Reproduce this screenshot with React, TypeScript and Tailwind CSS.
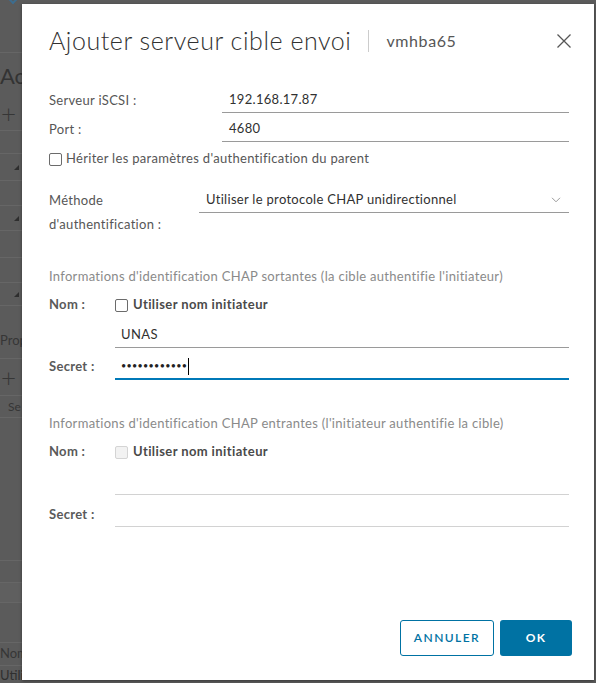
import { ReactNode } from 'react'

const font = { fontFamily: 'Lato, "Noto Sans", sans-serif' }

function Checkbox({ disabled }: { disabled?: boolean }) {
    return (
        <span
            className={
                disabled
                    ? 'inline-block w-[13px] h-[13px] rounded-[2px] border border-[#d4d4d4] bg-[#f2f2f2] shrink-0'
                    : 'inline-block w-[13px] h-[13px] rounded-[2px] border border-[#6b6b6b] bg-white shrink-0'
            }
        />
    )
}

function TextRow({ label, value, labelW }: { label: string; value: string; labelW: string }) {
    return (
        <div className="flex items-stretch h-[25px]">
            <div className={`${labelW} flex items-center text-[13px] tracking-[0.3px] text-[#565656]`}>{label}</div>
            <div className="flex-1 flex items-center px-[7px] border-b border-[#9a9a9a] text-[13px] tracking-[0.3px] text-[#313131]">
                {value}
            </div>
        </div>
    )
}

function BoldRow({ label, children, line, h = 'h-[25px]' }: { label: string; children?: ReactNode; line?: string; h?: string }) {
    return (
        <div className={`flex items-stretch ${h}`}>
            <div className="w-[66px] flex items-center text-[13px] font-bold tracking-[0.3px] text-[#5a5a5a]">{label}</div>
            <div className={`flex-1 flex items-center px-[6px] ${line || ''} text-[13px] text-[#313131]`}>{children}</div>
        </div>
    )
}

// dim page behind the dialog, only a thin strip of it shows
function BackgroundStrip() {
    const row = 'border-b border-[#666666] flex items-center overflow-hidden whitespace-nowrap text-[#363636]'
    const tri = <span className="ml-auto mr-[3px] w-0 h-0 border-l-[5px] border-l-transparent border-b-[5px] border-b-[#2e2e2e]" />
    return (
        <div className="w-[22px] flex flex-col text-[13px]" style={font}>
            <div className={`${row} h-[53px] items-start`}>
                <span className="ml-[10px] mt-[-3px] w-[6px] h-[6px] border-r-2 border-b-2 border-[#3d6d8f] rotate-45" />
            </div>
            <div className={`h-[44px] flex items-center text-[22px] text-[#333] overflow-hidden`}>Ac</div>
            <div className={`${row} h-[34px] text-[26px] font-light pl-[1px]`}>+</div>
            <div className={`${row} h-[23px]`} />
            <div className={`${row} h-[27px]`}>{tri}</div>
            <div className={`${row} h-[25px]`} />
            <div className={`${row} h-[25px]`}>{tri}</div>
            <div className={`${row} h-[27px]`} />
            <div className={`${row} h-[25px]`} />
            <div className={`${row} h-[23px]`}>{tri}</div>
            <div className={`${row} h-[53px] items-end pb-[8px]`}>Prop</div>
            <div className={`${row} h-[37px] text-[26px] font-light pl-[1px]`}>+</div>
            <div className={`${row} h-[22px] pl-[8px] text-[12px]`}>Se</div>
            <div className={`${row} h-[143px]`} />
            <div className={`${row} h-[22px]`} />
            <div className={`${row} h-[20px] bg-[#5f5f5f]`} />
            <div className={`${row} h-[40px]`} />
            <div className={`${row} h-[23px]`}>Nom</div>
            <div className="h-[20px] flex items-center text-[#2f2f2f] whitespace-nowrap">Utilis</div>
        </div>
    )
}

export default function App() {
    return (
        <div className="relative w-[596px] h-[683px] overflow-hidden bg-[#5b5b5b]" style={font}>
            <BackgroundStrip />

            {/* Dialog */}
            <div className="absolute left-[22px] top-[4px] w-[572px] h-[676px] bg-white shadow-[0_1px_3px_rgba(0,0,0,0.4)] flex flex-col pl-[27px] pr-[25px] pb-[24px]">
                {/* Header */}
                <div className="mt-[18px] h-[38px] flex items-center -mr-[3px]">
                    <h1 className="text-[25px] font-light text-[#313131] tracking-[0.55px]">Ajouter serveur cible envoi</h1>
                    <span className="mx-[17px] w-px h-[22px] bg-[#cccccc]" />
                    <span className="text-[16px] tracking-[0.6px] text-[#565656]">vmhba65</span>
                    <button className="ml-auto w-[16px] h-[16px] text-[#565656]" title="Fermer">
                        <svg viewBox="0 0 16 16" className="w-[16px] h-[16px]" fill="none" stroke="currentColor" strokeWidth="1.3">
                            <path d="M1.5 1.5 L14.5 14.5 M14.5 1.5 L1.5 14.5" />
                        </svg>
                    </button>
                </div>

                <div className="mt-[28px]">
                    <TextRow label="Serveur iSCSI :" value="192.168.17.87" labelW="w-[173px]" />
                </div>
                <div className="mt-[4px]">
                    <TextRow label="Port :" value="4680" labelW="w-[173px]" />
                </div>

                <label className="mt-[8px] h-[18px] flex items-center gap-[4px] text-[13px] tracking-[0.3px] text-[#565656]">
                    <Checkbox />
                    Hériter les paramètres d'authentification du parent
                </label>

                {/* Méthode */}
                <div className="mt-[20px] flex">
                    <div className="w-[150px] text-[13px] tracking-[0.3px] leading-[24px] text-[#565656]">
                        Méthode
                        <br />
                        d'authentification :
                    </div>
                    <div className="flex-1 h-[25px] flex items-center pl-[7px] pr-[8px] border-b border-[#9a9a9a] text-[13px] tracking-[0.3px] text-[#313131]">
                        Utiliser le protocole CHAP unidirectionnel
                        <svg viewBox="0 0 10 6" className="ml-auto w-[10px] h-[6px]" fill="none" stroke="#9a9a9a" strokeWidth="1">
                            <path d="M1 0.8 L5 4.8 L9 0.8" />
                        </svg>
                    </div>
                </div>

                {/* Sortantes */}
                <div className="mt-[32px] h-[18px] flex items-center text-[13px] tracking-[0.3px] text-[#8a8a8a]">
                    Informations d'identification CHAP sortantes (la cible authentifie l'initiateur)
                </div>
                <div className="mt-[10px]">
                    <BoldRow label="Nom :" h="h-[18px]">
                        <span className="-ml-[6px] flex items-center gap-[5px] font-bold tracking-[0.4px] text-[#4a4a4a]">
                            <Checkbox />
                            Utiliser nom initiateur
                        </span>
                    </BoldRow>
                </div>
                <div className="mt-[9px] ml-[66px] h-[25px] flex items-center px-[6px] border-b border-[#9a9a9a] text-[13px] tracking-[0.4px] text-[#313131]">
                    UNAS
                </div>
                <div className="mt-[6px]">
                    <BoldRow label="Secret :" h="h-[26px]" line="border-b-2 border-[#0079b8]">
                        <span className="text-[9px] tracking-[0.3px] text-[#222]">••••••••••••</span>
                        <span className="ml-[1px] w-px h-[17px] bg-black" />
                    </BoldRow>
                </div>

                {/* Entrantes */}
                <div className="mt-[35px] h-[18px] flex items-center text-[13px] tracking-[0.3px] text-[#8a8a8a]">
                    Informations d'identification CHAP entrantes (l'initiateur authentifie la cible)
                </div>
                <div className="mt-[10px]">
                    <BoldRow label="Nom :" h="h-[18px]">
                        <span className="-ml-[6px] flex items-center gap-[5px] font-bold tracking-[0.4px] text-[#4a4a4a]">
                            <Checkbox disabled />
                            Utiliser nom initiateur
                        </span>
                    </BoldRow>
                </div>
                <div className="mt-[9px] ml-[66px] h-[25px] border-b border-[#d2d2d2]" />
                <div className="mt-[7px]">
                    <BoldRow label="Secret :" line="border-b border-[#d2d2d2]" />
                </div>

                {/* Footer */}
                <div className="mt-auto flex justify-end gap-[6px] -mr-[3px]">
                    <button className="w-[94px] h-[36px] rounded-[3px] border border-[#0072a3] text-[12px] font-semibold tracking-[0.12em] text-[#0072a3]">
                        ANNULER
                    </button>
                    <button className="w-[72px] h-[36px] rounded-[3px] bg-[#0072a3] text-[12px] font-bold tracking-[0.1em] text-white">
                        OK
                    </button>
                </div>
            </div>
        </div>
    )
}
